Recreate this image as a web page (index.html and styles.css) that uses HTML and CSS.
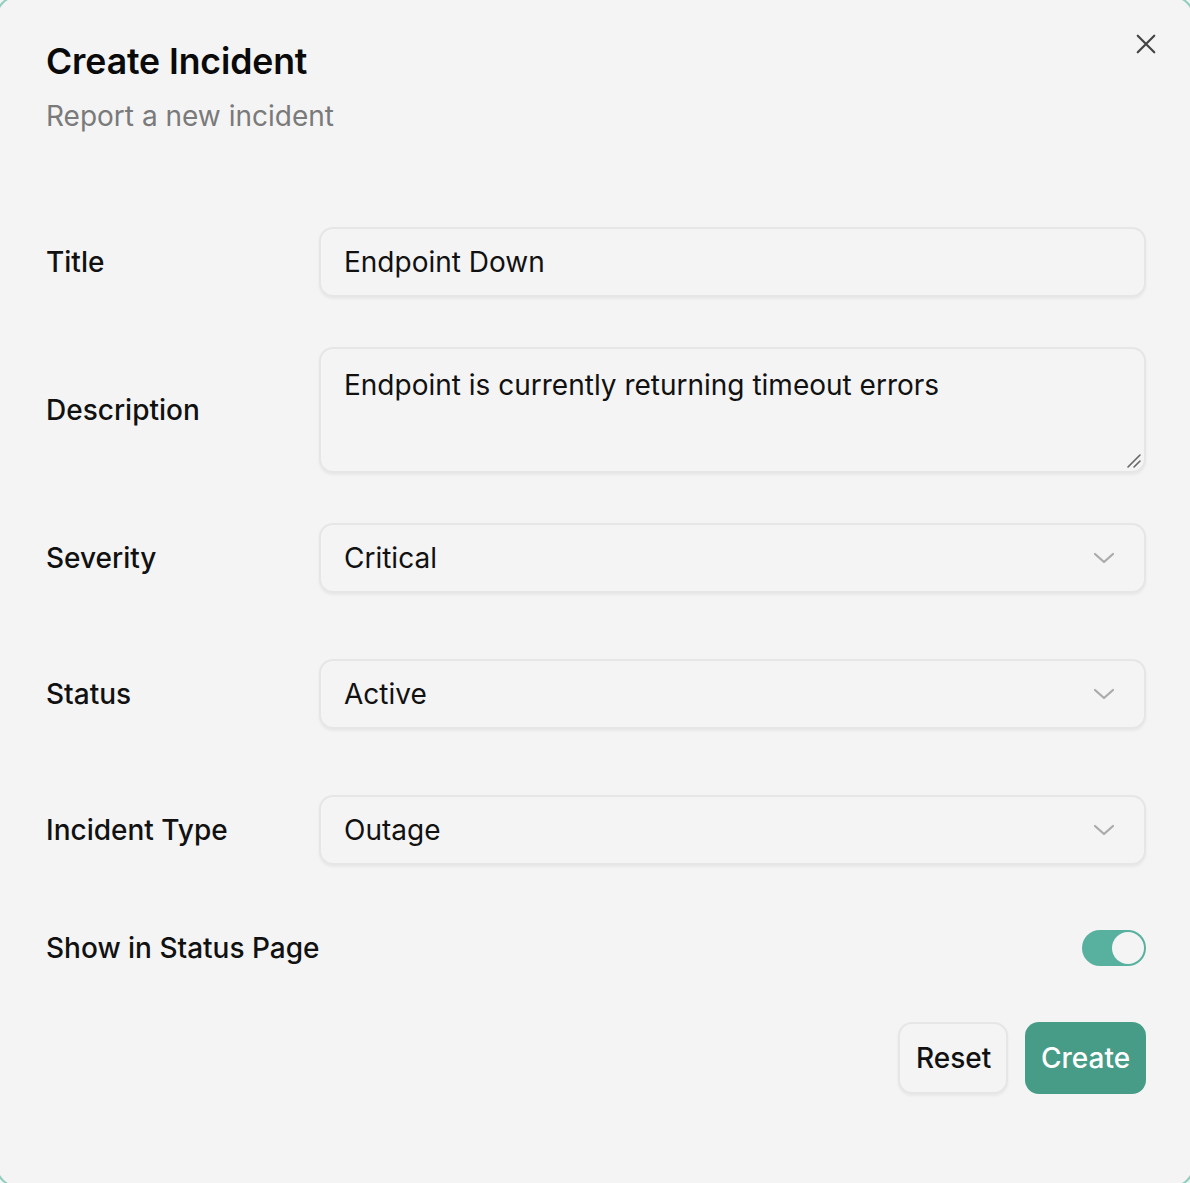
FILE: index.html
```html
<!DOCTYPE html>
<html lang="en">
<head>
<meta charset="utf-8">
<title>Create Incident</title>
<link rel="stylesheet" href="styles.css">
</head>
<body>
<div class="dialog">
  <button class="close" aria-label="Close">
    <svg width="24" height="24" viewBox="0 0 24 24" fill="none" stroke="#444" stroke-width="2.4" stroke-linecap="round"><path d="M3 3L21 21M21 3L3 21"/></svg>
  </button>
  <header class="head">
    <h1 class="title">Create Incident</h1>
    <p class="subtitle">Report a new incident</p>
  </header>
  <form class="form">
    <div class="row row-title">
      <label class="label">Title</label>
      <div class="field">Endpoint Down</div>
    </div>
    <div class="row row-desc">
      <label class="label">Description</label>
      <div class="field textarea">Endpoint is currently returning timeout errors
        <svg class="grip" width="16" height="16" viewBox="0 0 16 16" fill="none" stroke="#666" stroke-width="1.6" stroke-linecap="round"><path d="M14 2L2 14M14 8L8 14"/></svg>
      </div>
    </div>
    <div class="row row-select">
      <label class="label">Severity</label>
      <div class="field select">Critical<svg class="chev" width="22" height="14" viewBox="0 0 22 14" fill="none" stroke="#aaa" stroke-width="2.2" stroke-linecap="round" stroke-linejoin="round"><path d="M2 3L11 11L20 3"/></svg></div>
    </div>
    <div class="row row-select">
      <label class="label">Status</label>
      <div class="field select">Active<svg class="chev" width="22" height="14" viewBox="0 0 22 14" fill="none" stroke="#aaa" stroke-width="2.2" stroke-linecap="round" stroke-linejoin="round"><path d="M2 3L11 11L20 3"/></svg></div>
    </div>
    <div class="row row-select">
      <label class="label">Incident Type</label>
      <div class="field select">Outage<svg class="chev" width="22" height="14" viewBox="0 0 22 14" fill="none" stroke="#aaa" stroke-width="2.2" stroke-linecap="round" stroke-linejoin="round"><path d="M2 3L11 11L20 3"/></svg></div>
    </div>
    <div class="row row-toggle">
      <label class="label label-wide">Show in Status Page</label>
      <span class="toggle"><span class="knob"></span></span>
    </div>
    <div class="actions">
      <button type="button" class="btn btn-reset">Reset</button>
      <button type="button" class="btn btn-create">Create</button>
    </div>
  </form>
</div>
</body>
</html>
```
FILE: styles.css
```css
* { box-sizing: border-box; }
html, body { margin: 0; padding: 0; background: #f4f4f4; overflow: hidden; }
body { font-family: Inter, "Noto Sans", sans-serif; color: #111; }

.dialog {
  position: relative;
  margin: -3px;
  height: 1189px;
  border-radius: 22px;
  background: #f4f4f4;
  box-shadow: 0 0 0 2px #8fcdbd;
  padding: 44px 47px 0 49px;
}

.close {
  position: absolute;
  top: 36px;
  right: 34px;
  background: none;
  border: 0;
  padding: 0;
  width: 24px;
  height: 24px;
  display: flex;
}
.close svg { width: 22px; height: 22px; }

.head { margin-bottom: 94px; }
.title { margin: 0; font-size: 35.6px; font-weight: 600; line-height: 42px; letter-spacing: -0.1px; color: #0a0a0a; }
.subtitle { margin: 16px 0 0; font-size: 28px; line-height: 34px; color: #7a7a7a; font-weight: 400; }

.form { display: flex; flex-direction: column; }
.row { display: flex; align-items: center; }
.label { width: 273px; flex: none; font-size: 28px; font-weight: 500; color: #111; }
.label-wide { width: auto; white-space: nowrap; }

.field {
  flex: 1;
  height: 70px;
  border: 2px solid #e6e6e6;
  border-radius: 14px;
  background: #f4f4f4;
  box-shadow: 0 2px 3px rgba(0,0,0,0.05);
  padding: 0 23px;
  font-size: 28px;
  display: flex;
  align-items: center;
  color: #111;
}
.row-desc { margin-top: 50px; }
.textarea {
  position: relative;
  height: 126px;
  align-items: flex-start;
  padding-top: 19px;
}
.grip { position: absolute; right: 2px; bottom: 2px; }
.row-select { margin-top: 50px; }
.row-select + .row-select { margin-top: 66px; }
.select { justify-content: space-between; padding-right: 29px; }
.chev { flex: none; }

.row-toggle { margin-top: 65px; justify-content: space-between; height: 36px; }
.toggle {
  width: 64px; height: 36px; border-radius: 18px;
  background: #58b09f;
  display: flex; align-items: center; justify-content: flex-end;
  padding: 2px;
}
.knob { width: 32px; height: 32px; border-radius: 50%; background: #f4f4f4; }

.actions { display: flex; justify-content: flex-end; gap: 17px; margin-top: 56px; }
.btn {
  font-family: inherit;
  font-size: 28px;
  font-weight: 500;
  height: 72px;
  border-radius: 14px;
  padding: 0 16px;
  cursor: pointer;
}
.btn-reset { background: #f4f4f4; border: 2px solid #e6e6e6; color: #111; box-shadow: 0 2px 3px rgba(0,0,0,0.05); width: 110px; }
.btn-create { background: #479c87; border: 0; color: #fff; width: 121px; }
```
